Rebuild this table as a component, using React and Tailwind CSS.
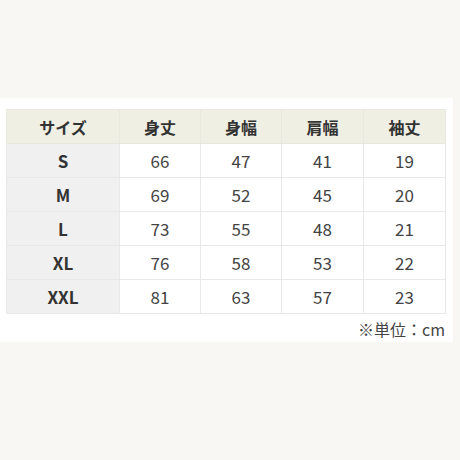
export default function App() {
  const rows = [
    ["S", 66, 47, 41, 19],
    ["M", 69, 52, 45, 20],
    ["L", 73, 55, 48, 21],
    ["XL", 76, 58, 53, 22],
    ["XXL", 81, 63, 57, 23],
  ];
  const heads = ["身丈", "身幅", "肩幅", "袖丈"];
  return (
    <div
      className="w-[460px] h-[460px] bg-[#f8f7f3] pt-[98px]"
      style={{ fontFamily: '"Noto Sans CJK JP", "Noto Sans", sans-serif' }}
    >
      <div className="w-[453px] h-[244px] bg-white pl-[6px] pt-[11px]">
        <table className="w-[439px] border-collapse table-fixed">
          <colgroup>
            <col className="w-[113px]" />
            <col className="w-[81px]" />
            <col className="w-[81px]" />
            <col className="w-[82px]" />
            <col className="w-[82px]" />
          </colgroup>
          <thead>
            <tr className="h-[34px] bg-[#f0efe4]">
              <th className="border border-[#e8e8e0] text-[16px] leading-[20px] font-bold text-[#333]">サイズ</th>
              {heads.map((h) => (
                <th key={h} className="border border-[#e8e8e0] text-[16px] leading-[20px] font-bold text-[#333]">{h}</th>
              ))}
            </tr>
          </thead>
          <tbody>
            {rows.map((r) => (
              <tr key={r[0]} className="h-[34px]">
                <td className="border border-[#e8e8e8] bg-[#f0f0f0] text-center text-[17px] leading-[20px] font-bold text-[#333]">{r[0]}</td>
                {r.slice(1).map((v, i) => (
                  <td key={i} className="border border-[#e8e8e8] text-center text-[17px] leading-[20px] text-[#444]">{v}</td>
                ))}
              </tr>
            ))}
          </tbody>
        </table>
        <div className="w-[439px] text-right text-[16px] text-[#444] leading-[28px] mt-[1px]">※単位：cm</div>
      </div>
    </div>
  );
}
